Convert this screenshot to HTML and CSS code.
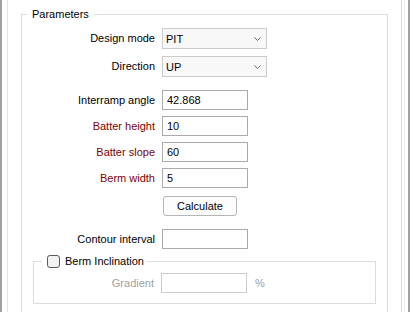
FILE: index.html
```html
<!DOCTYPE html>
<html lang="en">
<head>
  <meta charset="UTF-8">
  <title>Parameters</title>
  <link rel="stylesheet" href="styles.css">
</head>
<body>
  <div class="outer">
    <div class="inner">
      <fieldset class="group">
        <legend>Parameters</legend>

        <div class="row first">
          <label>Design mode</label>
          <div class="combo"><span>PIT</span>
            <svg width="7" height="5" viewBox="0 0 7 5"><path d="M0.5 0.5 L3.5 3.5 L6.5 0.5" fill="none" stroke="#666" stroke-width="1"/></svg>
          </div>
        </div>
        <div class="row">
          <label>Direction</label>
          <div class="combo"><span>UP</span>
            <svg width="7" height="5" viewBox="0 0 7 5"><path d="M0.5 0.5 L3.5 3.5 L6.5 0.5" fill="none" stroke="#666" stroke-width="1"/></svg>
          </div>
        </div>

        <div class="row wide">
          <label>Interramp angle</label>
          <input class="field" type="text" value="42.868">
        </div>
        <div class="row">
          <label class="req">Batter height</label>
          <input class="field" type="text" value="10">
        </div>
        <div class="row">
          <label class="req">Batter slope</label>
          <input class="field" type="text" value="60">
        </div>
        <div class="row">
          <label class="req">Berm width</label>
          <input class="field" type="text" value="5">
        </div>

        <div class="row btnrow">
          <label></label>
          <button class="btn">Calculate</button>
        </div>

        <div class="row wide">
          <label>Contour interval</label>
          <input class="field" type="text" value="">
        </div>

        <fieldset class="sub">
          <legend><span class="check"></span>Berm Inclination</legend>
          <div class="row">
            <label class="off">Gradient</label>
            <input class="field" type="text" value="" disabled>
            <span class="unit">%</span>
          </div>
        </fieldset>
      </fieldset>
    </div>
    <div class="rail"></div>
  </div>
</body>
</html>
```

FILE: styles.css
```css
body{
  margin: 0;
  background: #fff;
  font-family: "Liberation Sans", Arial, sans-serif;
  font-size: 11px;
  color: #000;
  overflow: hidden;
}
.outer{
  display: flex;
  height: 312px;
  overflow: hidden;
  border-left: 2px solid #a0a0a0;
  border-right: 2px solid #a0a0a0;
  padding-left: 5px;
  box-sizing: border-box;
}
.inner{
  flex: 1;
  border-left: 1px solid #e3e3e3;
  border-right: 1px solid #dcdcdc;
  padding-top: 8px;
  overflow: hidden;
}
.rail{
  width: 2px;
  margin-left: 2px;
  margin-right: 1px;
  border-left: 1px solid #efefef;
}
fieldset{
  margin: 0;
  padding: 0;
  min-width: 0;
  border: 1px solid #dcdcdc;
}
legend{
  line-height: 13px;
}
.group{
  margin: 0 13px;
  padding-bottom: 30px;
}
.group > legend{
  margin-left: 5px;
  padding: 0 5px;
}
.row{
  display: flex;
  align-items: center;
  margin-top: 6px;
}
.row.first{
  margin-top: 7px;
}
.row.first + .row{
  margin-top: 7px;
}
.row.wide{
  margin-top: 13px;
}
.row.btnrow{
  margin-top: 8px;
}
.row label{
  width: 133px;
  margin-right: 7px;
  text-align: right;
  line-height: 13px;
}
.req{
  color: #800000;
}
.off{
  color: #a0a0a0;
}
.combo{
  display: flex;
  align-items: center;
  justify-content: space-between;
  width: 105px;
  height: 21px;
  box-sizing: border-box;
  border: 1px solid #cbcbcb;
  background: #f8f8f8;
  padding: 0 5px 0 3px;
}
.combo svg{
  margin-top: 1px;
}
.field{
  width: 86px;
  height: 20px;
  box-sizing: border-box;
  border: 1px solid #aaaaaa;
  padding: 0 4px;
  margin: 0;
  font-family: inherit;
  font-size: 11px;
  color: #000;
  background: #fff;
  outline: none;
}
.field:disabled{
  border-color: #cccccc;
  background: #fff;
}
.btn{
  width: 74px;
  height: 20px;
  margin: 0 0 0 1px;
  padding: 0;
  border: 1px solid #b5b5b5;
  border-radius: 3px;
  background: #fdfdfd;
  font-family: inherit;
  font-size: 11px;
  color: #000;
}
.sub{
  margin: 5px 11px 0 11px;
  padding: 4px 0 10px 0;
}
.sub > legend{
  display: flex;
  align-items: center;
  gap: 5px;
  line-height: 15px;
  margin-left: 8px;
  padding: 0 3px 0 5px;
}
.check{
  width: 13px;
  height: 13px;
  box-sizing: border-box;
  border: 1px solid #5a5a5a;
  border-radius: 3px;
  background: #f3f3f3;
}
.sub .row{
  margin-top: 0;
}
.sub .row label{
  width: 120px;
}
.unit{
  margin-left: 8px;
  color: #a0a0a0;
}
```
